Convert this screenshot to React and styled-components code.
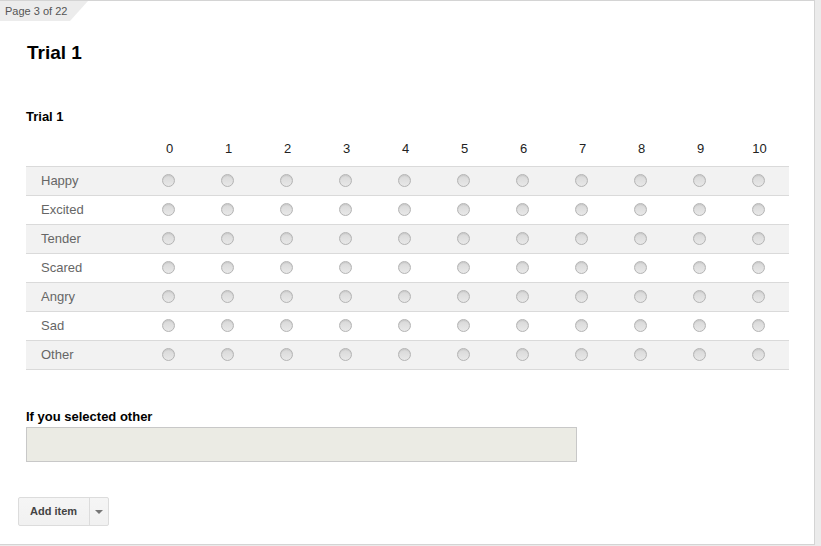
import styled, { createGlobalStyle } from 'styled-components';

const GlobalStyle = createGlobalStyle`
  html, body {
    margin: 0;
    padding: 0;
    background: #ebebeb;
    font-family: Arial, "Liberation Sans", sans-serif;
  }
`;

const scale = [0, 1, 2, 3, 4, 5, 6, 7, 8, 9, 10];
const feelings = ['Happy', 'Excited', 'Tender', 'Scared', 'Angry', 'Sad', 'Other'];

export default function App() {
  return (
    <>
      <GlobalStyle />
      <Page>
        <PageTab>Page 3 of 22</PageTab>
        <Body>
          <Title>Trial 1</Title>

          <QuestionLabel>Trial 1</QuestionLabel>
          <Grid>
            <HeaderRow>
              <RowLabel />
              {scale.map((n) => (
                <Cell key={n}>{n}</Cell>
              ))}
            </HeaderRow>
            {feelings.map((f, i) => (
              <GridRow key={f} $shaded={i % 2 === 0} $last={i === feelings.length - 1}>
                <RowLabel>{f}</RowLabel>
                {scale.map((n) => (
                  <Cell key={n}>
                    <Radio />
                  </Cell>
                ))}
              </GridRow>
            ))}
          </Grid>

          <OtherLabel>If you selected other</OtherLabel>
          <TextBox />

          <SplitButton>
            <MainPart>Add item</MainPart>
            <ArrowPart>
              <Caret />
            </ArrowPart>
          </SplitButton>
        </Body>
      </Page>
    </>
  );
}

const Page = styled.div`
  box-sizing: border-box;
  width: 815px;
  height: 545px;
  background: #fff;
  border-top: 1px solid #d4d4d4;
  border-right: 1px solid #d4d4d4;
  border-bottom: 1px solid #d4d4d4;
`;

const PageTab = styled.div`
  width: 88px;
  height: 20px;
  box-sizing: border-box;
  padding: 3px 0 0 5px;
  background: #ececec;
  color: #555;
  font-size: 11px;
  line-height: 14px;
  clip-path: polygon(0 0, 100% 0, 70px 100%, 0 100%);
`;

const Body = styled.div`
  padding: 0 0 0 26px;
`;

const Title = styled.h1`
  margin: 20px 0 0 1px;
  font-size: 19px;
  line-height: 24px;
  font-weight: bold;
  color: #000;
`;

const QuestionLabel = styled.div`
  margin-top: 44px;
  font-size: 13px;
  line-height: 16px;
  font-weight: bold;
  color: #000;
`;

const Grid = styled.div`
  margin-top: 7px;
  width: 763px;
  display: flex;
  flex-direction: column;
`;

const HeaderRow = styled.div`
  display: grid;
  grid-template-columns: 114px repeat(11, 59px);
  height: 34px;
  box-sizing: border-box;
  padding-top: 0;
  font-size: 13px;
  line-height: 16px;
  color: #222;
`;

const GridRow = styled.div`
  display: grid;
  grid-template-columns: 114px repeat(11, 59px);
  align-items: center;
  box-sizing: border-box;
  padding-bottom: 1px;
  border-top: 1px solid #dadada;
  border-bottom: ${({ $last }) => ($last ? '1px solid #dadada' : 'none')};
  height: ${({ $last }) => ($last ? '30px' : '29px')};
  background: ${({ $shaded }) => ($shaded ? '#f2f2f2' : '#fff')};
  font-size: 13px;
  color: #666;
`;

const RowLabel = styled.div`
  padding-left: 15px;
`;

const Cell = styled.div`
  display: flex;
  justify-content: center;
  align-items: center;
`;

const Radio = styled.span`
  display: block;
  width: 11px;
  height: 11px;
  margin-right: 3px;
  border-radius: 50%;
  border: 1px solid #b4b4b4;
  background: linear-gradient(#d8d8d8, #e8e8e8);
  box-shadow: inset 0 1px 1px rgba(0, 0, 0, 0.08);
`;

const OtherLabel = styled.div`
  margin-top: 39px;
  font-size: 13px;
  line-height: 16px;
  font-weight: bold;
  color: #000;
`;

const TextBox = styled.div`
  margin-top: 2px;
  box-sizing: border-box;
  width: 551px;
  height: 35px;
  background: #ebebe4;
  border: 1px solid #c8c8c8;
`;

const SplitButton = styled.div`
  margin: 35px 0 0 -8px;
  display: inline-flex;
  height: 29px;
  box-sizing: border-box;
  border: 1px solid #dcdcdc;
  border-radius: 2px;
  background: linear-gradient(#f5f5f5, #f1f1f1);
`;

const MainPart = styled.div`
  display: flex;
  align-items: center;
  padding: 0 12px 1px 11px;
  border-right: 1px solid #dcdcdc;
  font-size: 11px;
  font-weight: bold;
  color: #444;
`;

const ArrowPart = styled.div`
  width: 18px;
  display: flex;
  align-items: center;
  justify-content: center;
`;

const Caret = styled.span`
  width: 0;
  height: 0;
  border-left: 4px solid transparent;
  border-right: 4px solid transparent;
  border-top: 4px solid #777;
`;
